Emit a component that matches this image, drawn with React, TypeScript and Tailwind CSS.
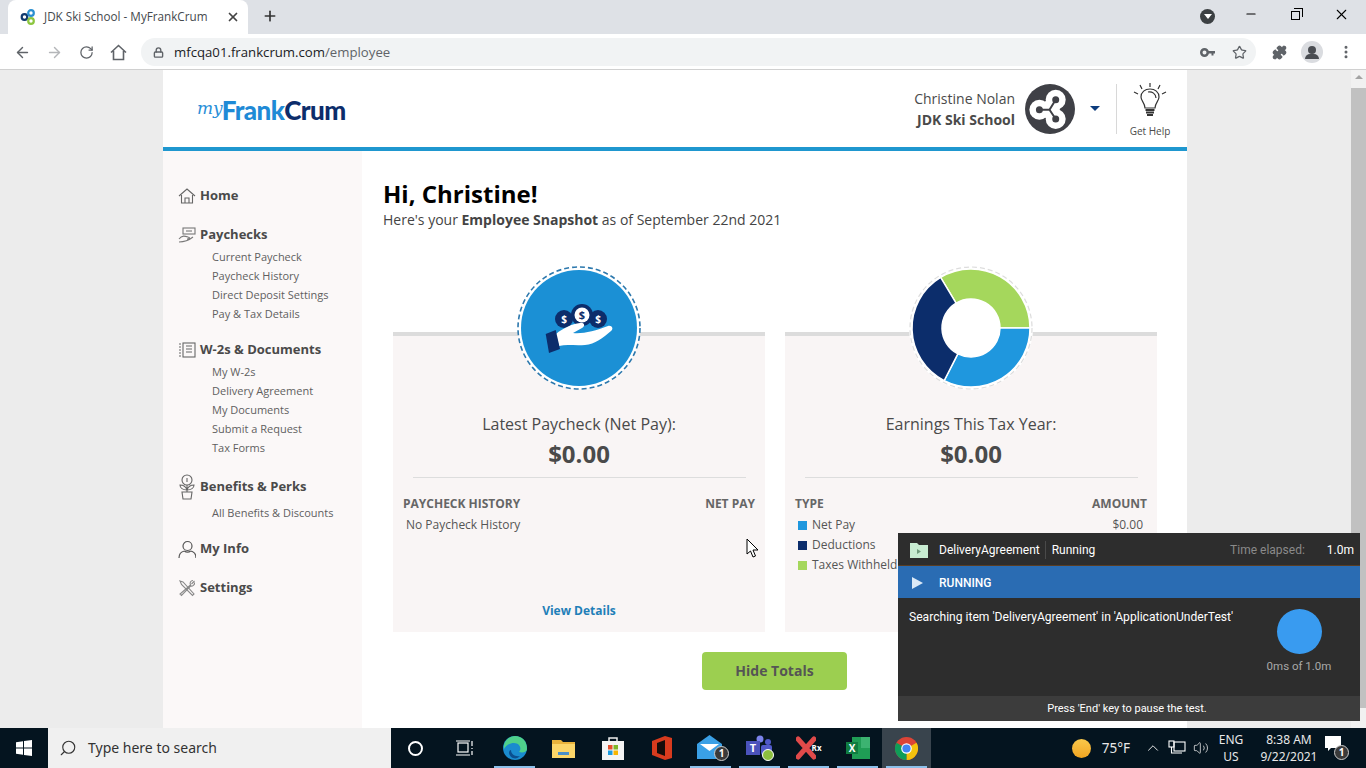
import React from 'react'
import { ArrowLeft, ArrowRight, RotateCw, Lock, Star, Puzzle, MoreVertical, X, Plus, Minus, Search, ChevronUp, Volume2 } from 'lucide-react'

const font = { fontFamily: '"Open Sans", sans-serif' }

function polar(r: number, deg: number) {
  const a = (deg - 90) * Math.PI / 180
  return `${(62 + r * Math.cos(a)).toFixed(2)} ${(62 + r * Math.sin(a)).toFixed(2)}`
}

function slice(start: number, end: number) {
  const big = end - start > 180 ? 1 : 0
  return `M${polar(59, start)} A59 59 0 ${big} 1 ${polar(59, end)} L${polar(29, end)} A29 29 0 ${big} 0 ${polar(29, start)} Z`
}

function Favicon() {
  return (
    <svg width="16" height="16" viewBox="0 0 16 16" fill="none" strokeWidth="2.200">
      <circle cx="4.500" cy="8" r="2.800" stroke="#123a6e" />
      <circle cx="11" cy="4" r="2.800" stroke="#2a8fd0" />
      <circle cx="11" cy="12" r="2.800" stroke="#8cc63f" />
    </svg>
  )
}

function CompanyLogo() {
  const bg = '#3f4046'
  return (
    <svg width="50" height="50" viewBox="0 0 50 50">
      <circle cx="25" cy="25" r="25" fill={bg} />
      <g fill="#fff">
        <circle cx="14.400" cy="25.700" r="10" />
        <circle cx="30.700" cy="15.700" r="10" />
        <circle cx="30.700" cy="35" r="10" />
      </g>
      <path d="M14.400 25.700 L30.700 15.700 L30.700 35 Z" fill="#fff" stroke="#fff" strokeWidth="8" />
      <path d="M14.400 25.700 H24.500 L30.700 15.700 M24.500 25.700 L30.700 35" stroke={bg} strokeWidth="2" fill="none" />
      <circle cx="14.400" cy="25.700" r="3.500" fill={bg} />
      <circle cx="30.700" cy="15.700" r="3.500" fill={bg} />
      <circle cx="30.700" cy="35" r="3.500" fill={bg} />
    </svg>
  )
}

function HomeIcon() {
  return (
    <svg width="18" height="18" viewBox="0 0 18 18" fill="none" stroke="#666" strokeWidth="1.1">
      <path d="M1 9 L9 2 L17 9" />
      <path d="M3.500 8 V16 H14.500 V8" />
      <path d="M7 16 V11 H11 V16" />
    </svg>
  )
}

function PayIcon() {
  return (
    <svg width="18" height="18" viewBox="0 0 18 18" fill="none" stroke="#777" strokeWidth="1.1">
      <rect x="5" y="2" width="12" height="6" />
      <path d="M8 5 H14" />
      <path d="M1 13 C4 9 7 10 10 11 C12 11.500 12 13 9 13 M1 16 C6 16 10 15 15 11" />
    </svg>
  )
}

function DocsIcon() {
  return (
    <svg width="18" height="18" viewBox="0 0 18 18" fill="none" stroke="#666" strokeWidth="1.1">
      <rect x="5" y="2" width="12" height="14" />
      <path d="M8 5 H14 M8 8 H14 M8 11 H14" />
      <path d="M1 3 H3 M1 6 H3 M1 9 H3 M1 12 H3 M1 15 H3" />
    </svg>
  )
}

function PerksIcon() {
  return (
    <svg width="18" height="26" viewBox="0 0 18 26" fill="none" stroke="#666" strokeWidth="1.1">
      <circle cx="9" cy="6" r="5" />
      <path d="M9 4 V8" />
      <path d="M9 11 V18 M9 16 C5 16 2 14 2 11 C6 11 8 13 9 16 M9 16 C13 16 16 14 16 11 C12 11 10 13 9 16" />
      <path d="M4 18 H14 L13 25 H5 Z" />
    </svg>
  )
}

function InfoIcon() {
  return (
    <svg width="18" height="19" viewBox="0 0 18 19" fill="none" stroke="#555" strokeWidth="1.2">
      <circle cx="9.500" cy="6" r="4.500" />
      <path d="M1 18 C1 13 4 11.500 6.500 11 M18 18 C18 13 15 11.500 12.500 11 M6.500 11 C8 12.500 11 12.500 12.500 11" />
    </svg>
  )
}

function SettingsIcon() {
  return (
    <svg width="18" height="18" viewBox="0 0 18 18" fill="none" stroke="#888" strokeWidth="1.1">
      <path d="M2 2 L5 3 L16 15 L14.500 16.500 L3.500 5.500 Z" />
      <path d="M16.500 2 L13.500 5 M15 1.500 C12.500 1.500 11.500 4 12.500 6 L2 15 L3.500 16.500 L12.500 7 C14.500 7.500 17 6 16.500 3.500" />
    </svg>
  )
}

function Bulb() {
  return (
    <svg width="34" height="36" viewBox="0 0 34 36" fill="none" stroke="#333" strokeWidth="1.2">
      <path d="M17 1 V5 M7 3 L9 7 M27 3 L25 7 M1 10 L5 12 M33 10 L29 12" />
      <path d="M12 26 C12 21 8 19 8 15 C8 10 12 7 17 7 C22 7 26 10 26 15 C26 19 22 21 22 26 Z" />
      <path d="M15 10 C19 9 23 12 23 16" />
      <path d="M12.500 28 H21.500 M13 30.500 H21 M14 33 H20" strokeWidth="2" />
    </svg>
  )
}

function KeyIcon() {
  return (
    <svg width="15" height="9" viewBox="0 0 15 9" fill="#5f6368">
      <path fillRule="evenodd" d="M4.500 0 A4.500 4.500 0 1 1 4.500 9 A4.500 4.500 0 1 1 4.500 0 Z M4.500 2.500 A2 2 0 1 0 4.500 6.500 A2 2 0 1 0 4.500 2.500 Z" />
      <path d="M8 3 H15 V5.500 H13.500 V7.500 H11.500 V5.500 H8 Z" />
    </svg>
  )
}

function PayCoin() {
  return (
    <svg width="124" height="124" viewBox="0 0 124 124">
      <circle cx="62" cy="62" r="61" fill="#fff" stroke="#2c78ad" strokeWidth="1.600" strokeDasharray="5 3" />
      <circle cx="62" cy="62" r="58" fill="#1b90d5" />
      <circle cx="47" cy="53" r="9" fill="#0c2d6b" />
      <circle cx="81" cy="53" r="9" fill="#0c2d6b" />
      <circle cx="65" cy="49" r="11" fill="#0c2d6b" />
      <circle cx="65" cy="49" r="7.500" fill="#fff" />
      <text x="47" y="57" fontSize="10" fontWeight="700" fill="#fff" textAnchor="middle" fontFamily="Open Sans">$</text>
      <text x="81" y="57" fontSize="10" fontWeight="700" fill="#fff" textAnchor="middle" fontFamily="Open Sans">$</text>
      <text x="65" y="53" fontSize="11" fontWeight="700" fill="#0c2d6b" textAnchor="middle" fontFamily="Open Sans">$</text>
      <path d="M39 68 C46 62 55 58 63 57 C67 56 69 60 65 62 L56 67 C66 68 78 65 91 60 C95 59 97 63 94 65 C86 72 78 78 68 79 C58 80 50 78 42 80 Z" fill="#fff" />
      <path d="M28.700 68 L38.700 64 L43 83 L32 87 Z" fill="#0c2d6b" />
    </svg>
  )
}

function Donut() {
  return (
    <svg width="124" height="124" viewBox="0 0 124 124">
      <circle cx="62" cy="62" r="62" fill="#fff" />
      <circle cx="62" cy="62" r="61" fill="none" stroke="#ddd" strokeWidth="1.200" strokeDasharray="5 3" />
      <path d={slice(-31, 90)} fill="#a5d75c" stroke="#fff" strokeWidth="1.500" />
      <path d={slice(90, 207)} fill="#1f97de" stroke="#fff" strokeWidth="1.500" />
      <path d={slice(207, 329)} fill="#0c2d6b" stroke="#fff" strokeWidth="1.500" />
    </svg>
  )
}

function WinLogo() {
  return (
    <svg width="16" height="16" viewBox="0 0 16 16" fill="#fff">
      <path d="M0 2.300 L7 1.200 V7.500 H0 Z M8 1 L16 0 V7.500 H8 Z M0 8.500 H7 V14.800 L0 13.700 Z M8 8.500 H16 V16 L8 15 Z" />
    </svg>
  )
}

function TaskIcon({ name }: { name: string }) {
  if (name === 'edge') {
    return (
      <svg width="24" height="24" viewBox="0 0 24 24">
        <circle cx="12" cy="12" r="12" fill="#1a8ccf" />
        <path d="M12 0 C19 0 24 5 24 13 C24 16 20 17 16 16 C19 13 17 7 11 7 C7 7 3 9 1 13 C0 5 6 0 12 0 Z" fill="#4fd18b" />
        <path d="M8 14 C8 18 12 21 17 20 C14 24 7 23 6 17 C6 15 7 14 8 14 Z" fill="#0b4f8f" />
      </svg>
    )
  }
  if (name === 'folder') {
    return (
      <svg width="23" height="19" viewBox="0 0 23 19">
        <path d="M0 1 H9 L11 3 H23 V19 H0 Z" fill="#e9b33c" />
        <rect y="5" width="23" height="14" fill="#fcd669" />
        <rect x="6" y="13" width="11" height="3" fill="#4a8fc9" />
      </svg>
    )
  }
  if (name === 'store') {
    return (
      <svg width="22" height="24" viewBox="0 0 22 24">
        <path d="M7 6 V2 H15 V6" fill="none" stroke="#eee" strokeWidth="1.500" />
        <rect y="5" width="22" height="19" fill="#f4f4f4" />
        <rect x="6" y="9" width="4.500" height="4.500" fill="#e5502e" />
        <rect x="11.500" y="9" width="4.500" height="4.500" fill="#7eb72a" />
        <rect x="6" y="14.500" width="4.500" height="4.500" fill="#1c9ce0" />
        <rect x="11.500" y="14.500" width="4.500" height="4.500" fill="#f7b500" />
      </svg>
    )
  }
  if (name === 'office') {
    return (
      <svg width="20" height="24" viewBox="0 0 20 24">
        <path d="M0 5 L13 0 L20 2 V22 L13 24 L0 19 Z" fill="#d83b1e" />
        <path d="M5 7 L13 4 V20 L5 17 Z" fill="#160c0a" />
      </svg>
    )
  }
  if (name === 'mail') {
    return (
      <div className="relative w-[32px] h-[26px] ml-[5px]">
        <svg width="25" height="24" viewBox="0 0 25 24">
          <path d="M0 9 L12.500 0 L25 9 V24 H0 Z" fill="#3aa0e6" />
          <path d="M3 9 H22 L12.500 16 Z" fill="#fff" />
        </svg>
        <span className="absolute right-0 bottom-0 w-[15px] h-[15px] rounded-full bg-[#3a3a3a] border border-[#ccc] text-white text-[10px] leading-[13px] text-center font-bold">1</span>
      </div>
    )
  }
  if (name === 'teams') {
    return (
      <div className="relative w-[28px] h-[26px]">
        <svg width="26" height="22" viewBox="0 0 26 22">
          <circle cx="14" cy="4" r="3.500" fill="#7b83eb" />
          <circle cx="22" cy="7" r="3" fill="#5059c9" />
          <rect x="15" y="10" width="11" height="10" rx="2" fill="#5059c9" />
          <rect x="0" y="6" width="14" height="14" fill="#4b53bc" />
          <text x="7" y="17" fontSize="11" fontWeight="700" fill="#fff" textAnchor="middle" fontFamily="Open Sans">T</text>
        </svg>
        <span className="absolute right-0 bottom-0 w-[12px] h-[12px] rounded-full bg-[#8dbf3f] border border-white" />
      </div>
    )
  }
  if (name === 'xrx') {
    return (
      <div className="relative w-[26px] h-[24px]">
        <svg width="20" height="24" viewBox="0 0 20 24">
          <path d="M2 3 L18 21 M18 3 L2 21" stroke="#e04a4a" strokeWidth="5" strokeLinecap="round" />
        </svg>
        <span className="absolute right-0 top-[6px] text-[8px] font-bold text-white">Rx</span>
      </div>
    )
  }
  if (name === 'excel') {
    return (
      <svg width="24" height="22" viewBox="0 0 24 22">
        <rect x="6" y="0" width="18" height="22" fill="#1f9d55" />
        <rect x="15" y="0" width="9" height="11" fill="#3cb371" />
        <rect x="0" y="5" width="12" height="12" fill="#107c41" />
        <text x="6" y="15" fontSize="10" fontWeight="700" fill="#fff" textAnchor="middle" fontFamily="Open Sans">X</text>
      </svg>
    )
  }
  return (
    <svg width="23" height="23" viewBox="0 0 24 24">
      <circle cx="12" cy="12" r="12" fill="#db4437" />
      <path d="M12 12 L22.400 6 A12 12 0 0 1 12 24 Z" fill="#f4c20d" />
      <path d="M12 12 L12 24 A12 12 0 0 1 1.600 6 Z" fill="#0f9d58" />
      <circle cx="12" cy="12" r="5.500" fill="#fff" />
      <circle cx="12" cy="12" r="4.300" fill="#4285f4" />
    </svg>
  )
}

const nav = [
  { label: 'Home', icon: <HomeIcon />, cls: '', subCls: '', subs: [] as string[] },
  { label: 'Paychecks', icon: <PayIcon />, cls: 'mt-[19px]', subCls: 'mt-[2px]', subs: ['Current Paycheck', 'Paycheck History', 'Direct Deposit Settings', 'Pay & Tax Details'] },
  { label: 'W-2s & Documents', icon: <DocsIcon />, cls: 'mt-[17px]', subCls: 'mt-[2px]', subs: ['My W-2s', 'Delivery Agreement', 'My Documents', 'Submit a Request', 'Tax Forms'] },
  { label: 'Benefits & Perks', icon: <PerksIcon />, cls: 'mt-[20px]', subCls: 'mt-[6px]', subs: ['All Benefits & Discounts'] },
  { label: 'My Info', icon: <InfoIcon />, cls: 'mt-[17px]', subCls: '', subs: [] },
  { label: 'Settings', icon: <SettingsIcon />, cls: 'mt-[19px]', subCls: '', subs: [] },
]

const taskbarApps = [
  { name: 'edge', open: true },
  { name: 'folder', open: false },
  { name: 'store', open: false },
  { name: 'office', open: false },
  { name: 'mail', open: true },
  { name: 'teams', open: true },
  { name: 'xrx', open: true },
  { name: 'excel', open: true },
  { name: 'chrome', open: true },
]

function Sidebar() {
  return (
    <aside className="w-[199px] shrink-0 bg-[#fbf8f8] pt-[35px] pl-[15px]">
      {nav.map((item) => (
        <div key={item.label} className={item.cls}>
          <div className="flex items-center h-5">
            <span className="w-[22px] flex shrink-0">{item.icon}</span>
            <span className="text-[13px] font-bold text-[#4a4a4a] whitespace-nowrap">{item.label}</span>
          </div>
          {item.subs.length > 0 && (
            <ul className={`${item.subCls} pl-[34px]`}>
              {item.subs.map((s) => (
                <li key={s} className="h-[19px] leading-[19px] text-[11px] text-[#5f5f5f] whitespace-nowrap">{s}</li>
              ))}
            </ul>
          )}
        </div>
      ))}
    </aside>
  )
}

function Card({ graphic, title, head, link, children }: { graphic: React.ReactNode; title: string; head: [string, string]; link?: string; children: React.ReactNode }) {
  return (
    <div className="w-[372px] h-[300px] bg-[#f9f5f5] border-t-4 border-[#dcdcdc] flex flex-col items-center">
      <div className="-mt-[70px] h-[124px]">{graphic}</div>
      <div className="mt-[22px] h-6 leading-6 text-base text-[#4a4a4a]">{title}</div>
      <div className="mt-[2px] h-8 leading-8 text-2xl font-bold text-[#4a4a4a]">$0.00</div>
      <div className="mt-[7px] w-[333px] border-t border-[#ddd]" />
      <div className="mt-[18px] w-full px-[10px] flex justify-between h-4 leading-4 text-xs font-bold text-[#666]">
        <span>{head[0]}</span>
        <span>{head[1]}</span>
      </div>
      <div className="mt-[3px] w-full text-xs text-[#555]">{children}</div>
      {link && <div className="mt-auto pb-[12px] text-xs leading-[18px] font-bold text-[#1f7fb8]">{link}</div>}
    </div>
  )
}

function EarnRow({ color, label, amount }: { color: string; label: string; amount?: string }) {
  return (
    <div className="h-5 flex items-center justify-between pl-[13px] pr-[14px]">
      <span className="flex items-center gap-[5px]">
        <span className={`w-[9px] h-[9px] ${color}`} />
        {label}
      </span>
      {amount && <span>{amount}</span>}
    </div>
  )
}

export default function App() {
  return (
    <div className="relative w-[1366px] h-[768px] overflow-hidden flex flex-col bg-[#ececec]" style={font}>
      {/* tab strip */}
      <div className="h-[34px] shrink-0 bg-[#dee1e6] flex items-end pl-[8px]">
        <div className="w-[240px] h-[34px] bg-white rounded-t-lg flex items-center pl-[12px] pr-[8px] pb-[1px]">
          <Favicon />
          <span className="ml-2 flex-1 text-[11.700px] text-[#45494d] whitespace-nowrap">JDK Ski School - MyFrankCrum</span>
          <X size={14} strokeWidth={3} className="text-[#444]" />
        </div>
        <Plus size={16} strokeWidth={2.500} className="ml-[14px] mb-[10px] text-[#333]" />
        <div className="ml-auto flex items-center h-full">
          <span className="w-[15px] h-[15px] mb-[2px] rounded-full bg-[#3c4043] flex items-center justify-center">
            <span className="w-0 h-0 border-x-[4px] border-x-transparent border-t-[5px] border-t-white" />
          </span>
          <Minus size={14} strokeWidth={2} className="ml-[29px] mb-[6px] text-black" />
          <span className="ml-[33px] mb-[6px] relative w-[12px] h-[12px]">
            <span className="absolute left-0 bottom-0 w-[9px] h-[9px] border border-black" />
            <span className="absolute right-0 top-0 w-[9px] h-[9px] border-t border-r border-black" />
          </span>
          <X size={17} strokeWidth={1.500} className="ml-[30px] mr-[16px] mb-[6px] text-black" />
        </div>
      </div>

      {/* toolbar */}
      <div className="h-[36px] shrink-0 bg-white border-b border-[#d0d0d0] flex items-center pl-[14px] pt-[1px]">
        <ArrowLeft size={17} className="text-[#5f6368]" />
        <ArrowRight size={17} className="ml-[15px] text-[#b4b6b9]" />
        <RotateCw size={15} className="ml-[16px] text-[#5f6368]" />
        <svg width="17" height="17" viewBox="0 0 17 17" fill="none" stroke="#5f6368" strokeWidth="1.600" className="ml-[16px]">
          <path d="M1 8.500 L8.500 1.500 L16 8.500 M3.500 7 V15.500 H13.500 V7" />
        </svg>
        <div className="ml-[14px] w-[1115px] h-[28px] rounded-full bg-[#f1f3f4] flex items-center pl-[12px] pr-[9px]">
          <Lock size={11} strokeWidth={3} className="text-[#5f6368]" />
          <span className="ml-[10px] pt-[2px] text-[13.200px] text-[#202124]">mfcqa01.frankcrum.com<span className="text-[#5f6368]">/employee</span></span>
          <span className="ml-auto"><KeyIcon /></span>
          <Star size={15} className="ml-[17px] text-[#5f6368]" />
        </div>
        <Puzzle size={15} fill="#5f6368" className="ml-[16px] text-[#5f6368]" />
        <span className="ml-[14px] w-[22px] h-[22px] rounded-full bg-[#dadce0] flex flex-col items-center justify-center">
          <span className="w-[8px] h-[8px] rounded-full bg-[#4a4d52]" />
          <span className="w-[14px] h-[5px] rounded-t-full bg-[#4a4d52]" />
        </span>
        <MoreVertical size={16} strokeWidth={2.500} className="ml-[15px] text-[#5f6368]" />
      </div>

      {/* page */}
      <div className="flex-1 min-h-0 flex">
        <div className="flex-1 min-w-0 flex justify-center pr-[1px]">
          <div className="w-[1024px] flex flex-col">
            <header className="h-[81px] shrink-0 bg-white border-b-4 border-[#1f97cf] flex items-center pl-[34px] pr-[17px]">
              <div className="flex items-end mt-[2px]">
                <span className="leading-[24px] italic text-[#2a8fd8] -mb-[3px] -mr-[1px] -translate-y-[5px]" style={{ fontFamily: '"DejaVu Serif", serif', fontSize: 17 }}>my</span>
                <span className="text-[26px] leading-[24px] tracking-[-0.600px] text-[#1f8ad6]" style={{ fontFamily: 'Lato, sans-serif', fontWeight: 900 }}>Frank</span>
                <span className="text-[26px] leading-[24px] tracking-[-0.600px] text-[#0c2d6b]" style={{ fontFamily: 'Lato, sans-serif', fontWeight: 900 }}>Crum</span>
              </div>
              <div className="ml-auto flex items-center">
                <div className="text-right text-sm leading-[21px] text-[#4a4a4a]">
                  <div>Christine Nolan</div>
                  <div className="font-bold">JDK Ski School</div>
                </div>
                <span className="ml-[10px]"><CompanyLogo /></span>
                <span className="ml-[15px] w-0 h-0 border-x-[5px] border-x-transparent border-t-[5px] border-t-[#0c3c7d]" />
                <span className="ml-[16px] w-px h-[50px] bg-[#d8d8d8]" />
                <div className="ml-[13px] w-[40px] flex flex-col items-center pt-[2px]">
                  <Bulb />
                  <span className="mt-[7px] text-[10px] leading-[12px] text-[#4a4a4a] whitespace-nowrap">Get Help</span>
                </div>
              </div>
            </header>
            <div className="flex-1 min-h-0 flex">
              <Sidebar />
              <main className="flex-1 bg-white pt-[27px] pl-[21px] pr-[21px]">
                <h1 className="h-8 leading-8 text-2xl font-bold text-black">Hi, Christine!</h1>
                <p className="h-5 leading-5 text-sm text-[#444]">Here's your <b>Employee Snapshot</b> as of September 22nd 2021</p>
                <div className="mt-[102px] ml-[10px] flex gap-5">
                  <Card graphic={<PayCoin />} title="Latest Paycheck (Net Pay):" head={['PAYCHECK HISTORY', 'NET PAY']} link="View Details">
                    <div className="h-5 leading-5 pl-[13px]">No Paycheck History</div>
                  </Card>
                  <Card graphic={<Donut />} title="Earnings This Tax Year:" head={['TYPE', 'AMOUNT']}>
                    <EarnRow color="bg-[#1f97de]" label="Net Pay" amount="$0.00" />
                    <EarnRow color="bg-[#0c2d6b]" label="Deductions" />
                    <EarnRow color="bg-[#a5d75c]" label="Taxes Withheld" />
                  </Card>
                </div>
                <div className="mt-5 flex justify-center">
                  <button className="w-[145px] h-[38px] rounded bg-[#9ccf50] text-sm font-bold text-[#555]">Hide Totals</button>
                </div>
              </main>
            </div>
          </div>
        </div>
        <div className="w-[15px] shrink-0 bg-[#f1f1f1] flex flex-col items-center pt-[5px]">
          <span className="w-0 h-0 border-x-[4px] border-x-transparent border-b-[4px] border-b-[#a3a3a3]" />
          <span className="mt-[9px] w-full h-[620px] bg-[#c1c1c1]" />
        </div>
      </div>

      {/* taskbar */}
      <div className="h-[40px] shrink-0 bg-[#04141f] flex items-stretch text-white">
        <div className="w-[48px] flex items-center justify-center"><WinLogo /></div>
        <div className="w-[343px] bg-[#f0f0f0] flex items-center pl-[11px] text-[#333]">
          <Search size={18} strokeWidth={1.500} className="-scale-x-100" />
          <span className="ml-[11px] text-sm" style={{ fontFamily: '"Noto Sans", sans-serif' }}>Type here to search</span>
        </div>
        <div className="w-[49px] flex items-center justify-center"><span className="w-[15px] h-[15px] rounded-full border-2 border-white" /></div>
        <div className="w-[48px] flex items-center justify-center">
          <svg width="17" height="16" viewBox="0 0 17 16" fill="none" stroke="#fff" strokeWidth="1.200">
            <rect x="2" y="3" width="10" height="9" />
            <path d="M0 1 H14 M0 15 H14 M16 1 V6 M16 8 V9 M16 11 V15" />
          </svg>
        </div>
        <div className="ml-[2px] flex items-stretch">
          {taskbarApps.map((a) => (
            <div key={a.name} className={`w-[49px] relative flex items-center justify-center ${a.name === 'chrome' ? 'bg-[#39444d]' : ''}`}>
              <TaskIcon name={a.name} />
              {a.open && <span className="absolute bottom-0 left-[4px] right-[4px] h-[2px] bg-[#8cc0ea]" />}
            </div>
          ))}
        </div>
        <div className="ml-auto flex items-center pr-[17px] text-[#e8e8e8]" style={{ fontFamily: '"Noto Sans", sans-serif' }}>
          <span className="w-[19px] h-[19px] rounded-full bg-linear-to-b from-[#f9c84a] to-[#f2a51f]" />
          <span className="ml-[11px] text-[13.500px]">75°F</span>
          <ChevronUp size={18} strokeWidth={1.300} className="ml-[14px]" />
          <svg width="18" height="16" viewBox="0 0 18 16" fill="none" stroke="#fff" strokeWidth="1.100" className="ml-[6px]">
            <rect x="6" y="2" width="11" height="9" />
            <rect x="1" y="1" width="5" height="6" />
            <path d="M3.500 7 V13 H13 M9 13 H14" />
          </svg>
          <Volume2 size={16} strokeWidth={1.200} className="ml-[7px]" />
          <div className="ml-[7px] w-[30px] text-center text-xs leading-[17px]">
            <div>ENG</div>
            <div>US</div>
          </div>
          <div className="ml-[11px] w-[64px] text-center text-xs leading-[17px]">
            <div>8:38 AM</div>
            <div>9/22/2021</div>
          </div>
          <div className="ml-[4px] relative w-[24px] h-[24px]">
            <svg width="16" height="16" viewBox="0 0 16 16" fill="#fff"><path d="M0 0 H16 V12 H6 L3 15 V12 H0 Z" /></svg>
            <span className="absolute right-0 bottom-0 w-[15px] h-[15px] rounded-full bg-[#3a3a3a] border border-[#ccc] text-white text-[10px] leading-[13px] text-center font-bold">1</span>
          </div>
        </div>
      </div>

      {/* test runner popup */}
      <div className="absolute left-[898px] top-[533px] w-[462px] h-[188px] bg-[#2d2d2d] flex flex-col text-white" style={{ fontFamily: 'Roboto, sans-serif' }}>
        <div className="h-[33px] shrink-0 flex items-center pl-[12px] pr-[6px] pt-[2px] border-b border-[#5a3d22] text-xs">
          <svg width="18" height="15" viewBox="0 0 18 15">
            <path d="M0 0 H7 L9 2 H18 V15 H0 Z" fill="#c8ecd2" />
            <path d="M7 6 L11 8.500 L7 11 Z" fill="#6f9a7c" />
          </svg>
          <span className="ml-[11px] pr-[5px] border-r border-[#4a4a4a] leading-[18px]">DeliveryAgreement</span>
          <span className="ml-[6px]">Running</span>
          <span className="ml-auto text-[#8a8a8a]">Time elapsed:</span>
          <span className="ml-[22px]">1.0m</span>
        </div>
        <div className="h-[32px] shrink-0 bg-[#2a6cb3] flex items-center pl-[14px] pt-[1px] text-xs font-medium">
          <span className="w-0 h-0 border-y-[6px] border-y-transparent border-l-[11px] border-l-[#dbe9f7]" />
          <span className="ml-[16px]">RUNNING</span>
        </div>
        <div className="flex-1 flex justify-between pl-[11px] pr-[28px] pt-[11px]">
          <span className="text-[12.100px] leading-[17px]">Searching item 'DeliveryAgreement' in 'ApplicationUnderTest'</span>
          <div className="w-[66px] flex flex-col items-center">
            <span className="w-[45px] h-[45px] rounded-full bg-[#399bf0]" />
            <span className="mt-[4px] text-[11.500px] leading-[16px] text-[#a8a8a8] whitespace-nowrap">0ms of 1.0m</span>
          </div>
        </div>
        <div className="h-[25px] shrink-0 bg-[#3c3c3c] flex items-center justify-center pt-[1px] pr-[4px] text-[11px]">Press 'End' key to pause the test.</div>
      </div>

      {/* mouse cursor */}
      <svg className="absolute left-[746px] top-[538px]" width="13" height="20" viewBox="0 0 13 20">
        <path d="M1 1 V16 L4.500 13 L7 19 L9.500 18 L7 12 H12 Z" fill="#fff" stroke="#000" strokeWidth="1" />
      </svg>
    </div>
  )
}
